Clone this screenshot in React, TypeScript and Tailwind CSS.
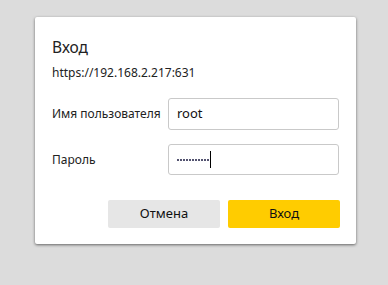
import React from 'react';

export default function App() {
  const dots = Array.from({ length: 11 });

  return (
    <div
      className="w-[388px] h-[285px] bg-[#dcdcdc] pt-[17px] pl-[35px]"
      style={{ fontFamily: '"Noto Sans", "Open Sans", sans-serif' }}
    >
      <div className="w-[321px] h-[227px] bg-white rounded-[2px] shadow-[0_1px_3px_rgba(0,0,0,0.55)] pt-[20px] pl-[17px] pr-[16px]">
        {/* Заголовок */}
        <div className="h-[20px] leading-[20px] text-[15.5px] text-[#222]">Вход</div>
        <div className="mt-[8px] h-[16px] leading-[16px] text-[12px] text-[#222]">
          https://192.168.2.217:631
        </div>

        {/* Поля */}
        <div className="mt-[17px] flex flex-col gap-[14px]">
          <div className="flex items-center">
            <div className="w-[116px] text-[12px] text-[#222]">Имя пользователя</div>
            <div className="w-[171px] h-[32px] border border-[#c9c9c9] rounded-[3px] flex items-center pl-[8px] text-[13px] text-[#111]">
              root
            </div>
          </div>
          <div className="flex items-center">
            <div className="w-[116px] text-[12px] text-[#222]">Пароль</div>
            <div className="w-[171px] h-[31px] border border-[#c9c9c9] rounded-[3px] flex items-center pl-[8px]">
              <div className="flex items-center gap-[1px]">
                {dots.map((_, i) => (
                  <span key={i} className="w-[2px] h-[2px] rounded-full bg-[#1a1a40]" />
                ))}
              </div>
              <span className="w-[1px] h-[17px] bg-black ml-[1px]" />
            </div>
          </div>
        </div>

        {/* Кнопки */}
        <div className="mt-[25px] flex justify-end gap-[8px]">
          <button className="w-[112px] h-[28px] bg-[#e6e6e6] rounded-[2px] text-[13px] text-[#111]">
            Отмена
          </button>
          <button className="w-[112px] h-[28px] bg-[#ffcc00] rounded-[2px] text-[13px] text-[#111]">
            Вход
          </button>
        </div>
      </div>
    </div>
  );
}
